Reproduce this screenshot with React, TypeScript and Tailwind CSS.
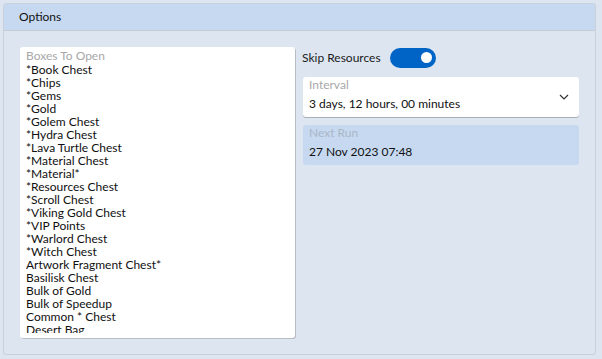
import React from "react";

const items = [
  "*Book Chest",
  "*Chips",
  "*Gems",
  "*Gold",
  "*Golem Chest",
  "*Hydra Chest",
  "*Lava Turtle Chest",
  "*Material Chest",
  "*Material*",
  "*Resources Chest",
  "*Scroll Chest",
  "*Viking Gold Chest",
  "*VIP Points",
  "*Warlord Chest",
  "*Witch Chest",
  "Artwork Fragment Chest*",
  "Basilisk Chest",
  "Bulk of Gold",
  "Bulk of Speedup",
  "Common * Chest",
  "Desert Bag",
  "Dragon Chest",
];

export default function App() {
  return (
    <div
      className="w-[602px] h-[359px] bg-[#dce5f0] pt-[3px] pl-[3px] overflow-hidden text-[12px] text-[#1b1b1b]"
      style={{ fontFamily: 'Lato, "Noto Sans", sans-serif' }}
    >
      <div className="w-[593px] h-[352px] border border-[#c9d0d9] rounded-[3px] flex flex-col overflow-hidden">
        <div className="h-[27px] shrink-0 bg-[#c6d9f0] border-b border-[#c4cbd4] flex items-center pl-[15px] text-[#111]">
          Options
        </div>
        <div className="flex flex-1 pt-[16px] pl-[16px] gap-[7px]">
          <div className="w-[275px] h-[291px] bg-white rounded-[3px] shadow-[1px_1px_0_#b9bec5] pl-[6px] pt-[1px]">
            <div className="h-[285px] overflow-hidden">
              <div className="h-[15px] leading-[15px] text-[#a8a8a8]">Boxes To Open</div>
              {items.map((it) => (
                <div key={it} className="h-[13px] leading-[13px] whitespace-nowrap text-[#101010]">
                  {it}
                </div>
              ))}
            </div>
          </div>
          <div className="w-[277px] flex flex-col">
            <div className="flex items-center h-[21px]">
              <span className="w-[88px]">Skip Resources</span>
              <div className="w-[46px] h-[20px] rounded-full bg-[#0064c6] flex items-center justify-end pr-[4px]">
                <div className="w-[11px] h-[11px] rounded-full bg-white" />
              </div>
            </div>
            <div className="mt-[9px] ml-[1px] w-[276px] h-[40px] bg-white rounded-[3px] shadow-[0_1px_0_#a9aeb5] relative pl-[6px]">
              <div className="h-[16px] leading-[16px] text-[#a8a8a8]">Interval</div>
              <div className="leading-[22px] text-[#111]">3 days, 12 hours, 00 minutes</div>
              <svg
                className="absolute right-[10px] top-[17px]"
                width="10"
                height="6"
                viewBox="0 0 10 6"
                fill="none"
              >
                <path d="M1 1 L5 5 L9 1" stroke="#333" strokeWidth="1.2" />
              </svg>
            </div>
            <div className="mt-[8px] ml-[1px] w-[276px] h-[40px] bg-[#c6d9f0] rounded-[3px] pl-[6px]">
              <div className="h-[16px] leading-[16px] text-[#aab7c7]">Next Run</div>
              <div className="leading-[22px] text-[#111]">27 Nov 2023 07:48</div>
            </div>
          </div>
        </div>
      </div>
    </div>
  );
}
